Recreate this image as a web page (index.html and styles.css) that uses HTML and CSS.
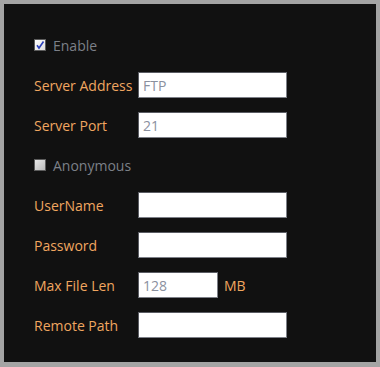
FILE: index.html
```html
<!DOCTYPE html>
<html>
  <head>
    <title>FTP Settings</title>
    <meta charset="UTF-8">
    <link rel="stylesheet" href="styles.css">
  </head>
  <body>
    <div id="frame">
      <div id="panel">
        <div class="row">
          <label class="check"><span class="box checked"><svg width="10" height="10" viewBox="0 0 10 10"><path d="M2 5.2 L4 8 L8.5 1.5" fill="none" stroke="#2a3fb8" stroke-width="1.6"/></svg></span>Enable</label>
        </div>
        <div class="row">
          <span class="label">Server Address</span>
          <input type="text" class="field" value="FTP">
        </div>
        <div class="row">
          <span class="label">Server Port</span>
          <input type="text" class="field" value="21">
        </div>
        <div class="row">
          <label class="check"><span class="box"></span>Anonymous</label>
        </div>
        <div class="row">
          <span class="label">UserName</span>
          <input type="text" class="field">
        </div>
        <div class="row">
          <span class="label">Password</span>
          <input type="password" class="field">
        </div>
        <div class="row">
          <span class="label">Max File Len</span>
          <input type="text" class="field short" value="128">
          <span class="unit">MB</span>
        </div>
        <div class="row">
          <span class="label">Remote Path</span>
          <input type="text" class="field">
        </div>
      </div>
    </div>
  </body>
</html>
```
FILE: styles.css
```css
body {
  margin: 0;
  background-color: #a4a4a4;
  font-family: "Open Sans", "Liberation Sans", sans-serif;
  font-size: 14px;
}

#frame {
  width: 380px;
  height: 367px;
  box-sizing: border-box;
  padding: 4px 4px 5px 4px;
  background-color: #a4a4a4;
}

#panel {
  height: 100%;
  box-sizing: border-box;
  background-color: #111111;
  padding: 21px 0 0 30px;
}

.row {
  height: 40px;
  display: flex;
  align-items: center;
}

.label {
  width: 104px;
  color: #f0a660;
}

.check {
  display: flex;
  align-items: center;
  color: #7c8088;
}

.box {
  width: 10px;
  height: 10px;
  border: 1px solid #5c5c5c;
  background: linear-gradient(135deg, #e8e8e8, #b9b9b9);
  margin-right: 7px;
  display: flex;
  align-items: center;
  justify-content: center;
}

.box.checked {
  background: linear-gradient(135deg, #ffffff, #dcdcdc);
}

.field {
  width: 149px;
  height: 26px;
  box-sizing: border-box;
  margin: 0;
  padding: 0 4px;
  border: 1px solid #7d8088;
  border-top-color: #5a5c63;
  border-left-color: #5a5c63;
  background-color: #ffffff;
  color: #8a909e;
  font-family: inherit;
  font-size: 14px;
  outline: none;
}

.field.short {
  width: 80px;
}

.unit {
  margin-left: 6px;
  color: #f0a660;
}
```
